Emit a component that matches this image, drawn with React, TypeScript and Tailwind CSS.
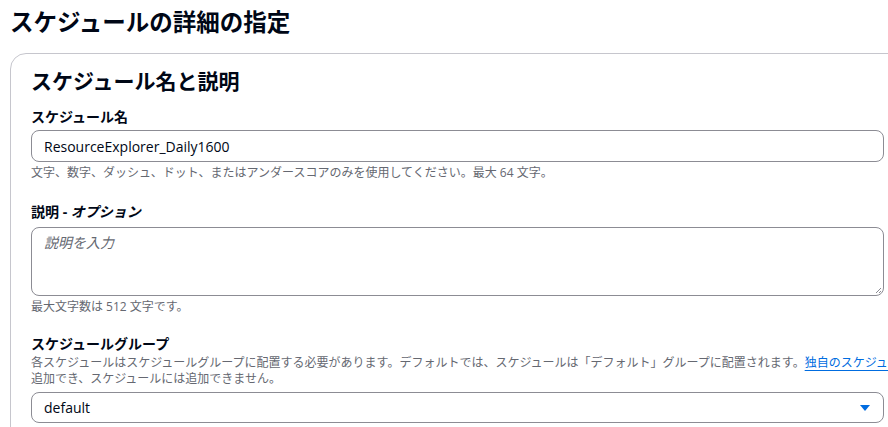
import React from "react";

const font = { fontFamily: '"Open Sans", "Noto Sans CJK JP", sans-serif' };

export default function App() {
  return (
    <div
      className="w-[888px] h-[427px] overflow-hidden bg-white text-[#000716]"
      style={font}
    >
      <h1 className="pl-[10px] pt-[7px] text-[23.5px] leading-[30px] font-bold whitespace-nowrap">
        スケジュールの詳細の指定
      </h1>
      <div className="ml-[10px] mt-[16px] w-[895px] rounded-[16px] border border-[#c6c6cd] bg-white px-[20px] pt-[14px] pb-[20px]">
        <h2 className="text-[21px] leading-[26px] font-bold whitespace-nowrap">
          スケジュール名と説明
        </h2>

        <div className="mt-[14px] text-[14px] leading-[18px] font-bold">
          スケジュール名
        </div>
        <div className="mt-[4px] h-[32px] w-full rounded-[8px] border border-[#8c8c94] flex items-center px-[12px] text-[14px]">
          ResourceExplorer_Daily1600
        </div>
        <div className="mt-[3px] text-[12px] leading-[16px] text-[#656871] whitespace-nowrap">
          文字、数字、ダッシュ、ドット、またはアンダースコアのみを使用してください。最大 64 文字。
        </div>

        <div className="mt-[22px] text-[14px] leading-[18px] font-bold whitespace-nowrap">
          説明 - <span className="italic">オプション</span>
        </div>
        <div className="relative mt-[6px] h-[69px] w-full rounded-[8px] border border-[#8c8c94] px-[12px] pt-[4px] text-[14px] leading-[22px] italic text-[#656871]">
          説明を入力
          <svg
            className="absolute right-[1px] bottom-[1px]"
            width="8"
            height="8"
            viewBox="0 0 8 8"
          >
            <path d="M7 2 L2 7 M7 5 L5 7" stroke="#8c8c94" strokeWidth="1" />
          </svg>
        </div>
        <div className="mt-[3px] text-[12px] leading-[16px] text-[#656871] whitespace-nowrap">
          最大文字数は 512 文字です。
        </div>

        <div className="mt-[20px] text-[14px] leading-[18px] font-bold whitespace-nowrap">
          スケジュールグループ
        </div>
        <div className="mt-[2px] text-[12px] leading-[16px] text-[#656871] whitespace-nowrap">
          各スケジュールはスケジュールグループに配置する必要があります。デフォルトでは、スケジュールは「デフォルト」グループに配置されます。
          <span className="text-[#006ce0] underline underline-offset-[3px]">
            独自のスケジュールグループを作成
          </span>
          できます。タグはスケジュールグループにのみ
          <br />
          追加でき、スケジュールには追加できません。
        </div>
        <div className="mt-[5px] h-[31px] w-full rounded-[8px] border border-[#8c8c94] flex items-center justify-between pl-[12px] pr-[12px] text-[14px]">
          <span>default</span>
          <svg width="12" height="8" viewBox="0 0 12 8">
            <path d="M1 1 H11 L6 7 Z" fill="#006ce0" />
          </svg>
        </div>
      </div>
    </div>
  );
}
